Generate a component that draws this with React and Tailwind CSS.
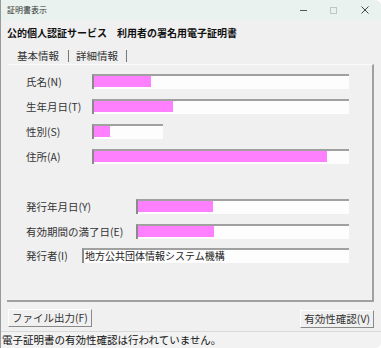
import React from "react";

const font = { fontFamily: '"Noto Sans CJK JP", "Noto Sans", sans-serif' };

function Field({ width, fill, text }) {
  return (
    <div
      className="h-[15px] border-t-2 border-l-2 border-t-[#a0a0a0] border-l-[#8a8a8a] bg-[#fdfdfd] flex items-start"
      style={{ width }}
    >
      {fill ? <div className="h-[11px] bg-[#ff80ff]" style={{ width: fill }} /> : null}
      {text ? (
        <span className="pl-[1px] text-[10px] leading-[12px] text-[#222]">{text}</span>
      ) : null}
    </div>
  );
}

function Row({ label, labelW, width, fill, text, mt }) {
  return (
    <div className="flex items-center" style={{ marginTop: mt }}>
      <div className="text-[10.5px] leading-[15px] text-[#333]" style={{ width: labelW }}>
        {label}
      </div>
      <Field width={width} fill={fill} text={text} />
    </div>
  );
}

export default function App() {
  return (
    <div
      className="w-[381px] h-[348px] bg-[#f0f0f0] overflow-hidden relative flex flex-col border-l border-l-[#9a9a9a] rounded-tr-[6px] rounded-br-[6px]"
      style={font}
    >
      {/* title bar */}
      <div className="h-[20px] bg-[#e9f2ee] flex items-center pl-[6px] shrink-0">
        <span className="text-[8px] text-[#333] leading-none">証明書表示</span>
        <div className="ml-auto flex items-center h-full">
          <div className="w-[30px] flex justify-center">
            <div className="w-[7px] h-px bg-[#555]" />
          </div>
          <div className="w-[30px] flex justify-center">
            <div className="w-[7px] h-[7px] border border-[#c4c4c4]" />
          </div>
          <div className="w-[33px] flex justify-center">
            <svg width="8" height="8" viewBox="0 0 8 8">
              <path d="M0.5 0.5 L7.5 7.5 M7.5 0.5 L0.5 7.5" stroke="#444" strokeWidth="1" />
            </svg>
          </div>
        </div>
      </div>

      {/* heading */}
      <div className="h-[24px] flex items-center pl-[6px] shrink-0">
        <span className="text-[10px] font-bold text-[#111] tracking-[0px] whitespace-pre">
          公的個人認証サービス　利用者の署名用電子証明書
        </span>
      </div>

      {/* tabs */}
      <div className="h-[20px] flex items-end pl-[16px] shrink-0 text-[10.5px] text-[#333]">
        <div className="flex items-center h-[16px]">
          <span>基本情報</span>
          <span className="ml-[9px] w-px h-[12px] bg-[#777]" />
          <span className="ml-[7px]">詳細情報</span>
          <span className="ml-[8px] w-px h-[12px] bg-[#777]" />
        </div>
      </div>

      {/* panel */}
      <div className="ml-[6px] w-[367px] h-[238px] border-r-2 border-b-2 border-r-[#a0a0a0] border-b-[#a0a0a0] border-t border-t-[#fafafa] pl-[19px] pt-[9px] shrink-0">
        <Row label="氏名(N)" labelW={66} width={257} fill={57} mt={0} />
        <Row label="生年月日(T)" labelW={66} width={257} fill={79} mt={10} />
        <Row label="性別(S)" labelW={66} width={71} fill={16} mt={10} />
        <Row label="住所(A)" labelW={66} width={257} fill={233} mt={10} />
        <Row label="発行年月日(Y)" labelW={110} width={213} fill={75} mt={35} />
        <Row label="有効期間の満了日(E)" labelW={110} width={213} fill={76} mt={10} />
        <Row label="発行者(I)" labelW={56} width={267} text="地方公共団体情報システム機構" mt={9} />
      </div>

      {/* buttons */}
      <div className="flex items-start justify-between pl-[7px] pr-[7px] mt-[7px] shrink-0">
        <button className="h-[18px] px-[3px] border border-t-[#fdfdfd] border-l-[#fdfdfd] border-r-[#8a8a8a] border-b-[#8a8a8a] bg-[#f0f0f0] text-[10.5px] leading-[16px] text-[#333]">
          ファイル出力(F)
        </button>
        <button className="h-[18px] mt-[1px] px-[3px] border border-t-[#fdfdfd] border-l-[#fdfdfd] border-r-[#8a8a8a] border-b-[#8a8a8a] bg-[#f0f0f0] text-[10.5px] leading-[16px] text-[#333]">
          有効性確認(V)
        </button>
      </div>

      {/* status bar */}
      <div className="mt-auto h-[17px] border-t border-t-[#d8d8d8] bg-[#f2f2f2] flex items-center pl-[1px] rounded-br-[6px]">
        <span className="text-[10.5px] leading-none text-[#111]">
          電子証明書の有効性確認は行われていません。
        </span>
      </div>
    </div>
  );
}
